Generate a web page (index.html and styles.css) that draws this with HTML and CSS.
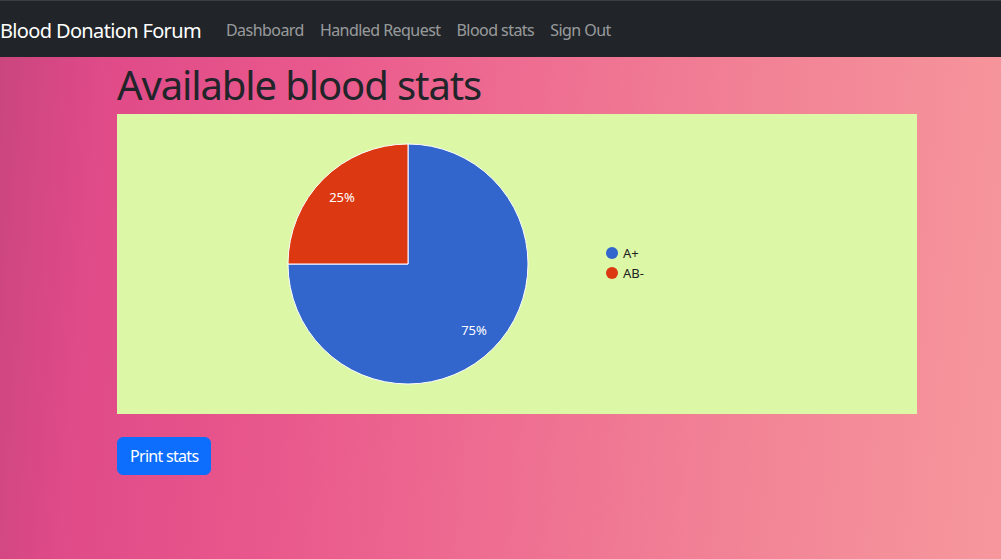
FILE: index.html
```html
<!DOCTYPE html>
<html lang="en">
<head>
<meta charset="utf-8">
<title>Blood stats</title>
<link rel="stylesheet" href="styles.css">
</head>
<body>
<nav class="navbar">
  <a class="brand" href="#">Blood Donation Forum</a>
  <ul class="nav-links">
    <li><a href="#">Dashboard</a></li>
    <li><a href="#">Handled Request</a></li>
    <li><a href="#">Blood stats</a></li>
    <li><a href="#">Sign Out</a></li>
  </ul>
</nav>
<main class="content">
  <h1 class="title">Available blood stats</h1>
  <div class="chart">
    <svg width="800" height="300" viewBox="0 0 800 300" xmlns="http://www.w3.org/2000/svg">
      <path d="M291,150 L291,30 A120,120 0 1,1 171,150 Z" fill="#3366cc" stroke="#ffffff" stroke-width="1"/>
      <path d="M291,150 L291,30 A120,120 0 0,0 171,150 Z" fill="#dc3912" stroke="#ffffff" stroke-width="1"/>
      <text x="225" y="88" class="slice-label" text-anchor="middle">25%</text>
      <text x="357" y="221" class="slice-label" text-anchor="middle">75%</text>
      <circle cx="495" cy="139" r="6" fill="#3366cc"/>
      <text x="506" y="144" class="legend-label">A+</text>
      <circle cx="495" cy="159" r="6" fill="#dc3912"/>
      <text x="506" y="164" class="legend-label">AB-</text>
    </svg>
  </div>
  <button class="btn" type="button">Print stats</button>
</main>
</body>
</html>
```

FILE: styles.css
```css
* { box-sizing: border-box; }
html, body { margin: 0; padding: 0; }
body {
  font-family: "Noto Sans", "Open Sans", sans-serif;
  color: #212529;
  height: 559px;
  overflow: hidden;
  background: linear-gradient(95deg, #c9457d 0%, #df4a88 10%, #e9588c 30%, #ee6c91 50%, #f17f95 70%, #f48e99 88%, #f7979c 100%);
}
.navbar {
  height: 57px;
  padding-top: 2px;
  background: #212529;
  border-top: 1px solid #3a3f44;
  display: flex;
  align-items: center;
}
.brand {
  color: #fff;
  text-decoration: none;
  font-size: 20px;
  margin-right: 17px;
  letter-spacing: -0.65px;
}
.nav-links {
  list-style: none;
  margin: 0;
  padding: 0;
  display: flex;
}
.nav-links a {
  display: block;
  padding: 8px;
  color: rgba(255,255,255,0.55);
  text-decoration: none;
  font-size: 16px;
  letter-spacing: -0.55px;
}
.content {
  padding-left: 117px;
}
.title {
  margin: 0 0 6px 0;
  padding-top: 4px;
  font-size: 40px;
  font-weight: 400;
  line-height: 47px;
  letter-spacing: -1.1px;
  color: #212529;
}
.chart {
  width: 800px;
  height: 300px;
  background: #dcf7a6;
}
.chart svg { display: block; }
.slice-label {
  fill: #ffffff;
  font-family: "Noto Sans", "Open Sans", sans-serif;
  font-size: 13px;
}
.legend-label {
  fill: #222222;
  font-family: "Noto Sans", "Open Sans", sans-serif;
  font-size: 13px;
}
.btn {
  display: block;
  margin-top: 23px;
  background: #0d6efd;
  color: #fff;
  border: 1px solid #0d6efd;
  border-radius: 6px;
  font-family: "Noto Sans", "Open Sans", sans-serif;
  font-size: 16px;
  height: 38px;
  padding: 0 12px;
  white-space: nowrap;
  letter-spacing: -0.7px;
}
```
